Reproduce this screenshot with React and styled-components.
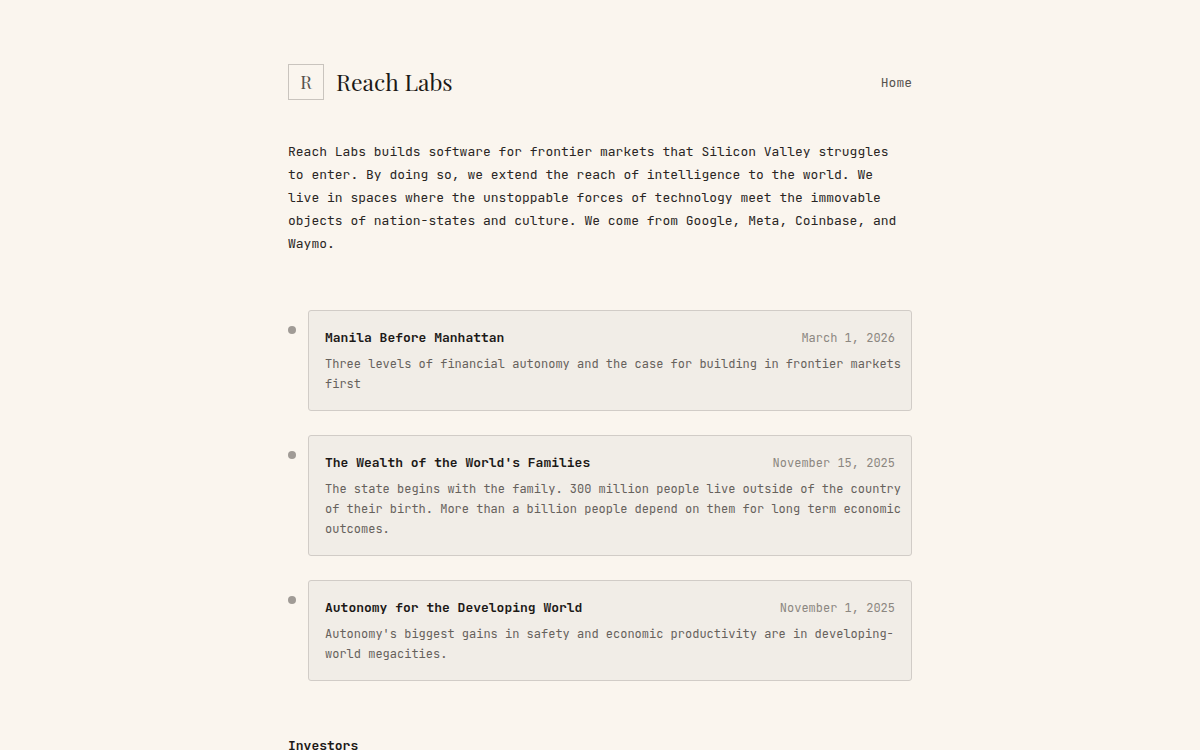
import React from "react";
import styled, { createGlobalStyle } from "styled-components";

const GlobalStyle = createGlobalStyle`
  *, *::before, *::after {
    box-sizing: border-box;
  }

  body {
    margin: 0;
    background-color: #faf5ee;
    color: #292524;
    font-family: "JetBrains Mono", "DejaVu Sans Mono", monospace;
    font-size: 13px;
  }

  h1, h2, p, ul {
    margin: 0;
    padding: 0;
  }

  a {
    color: inherit;
    text-decoration: none;
  }
`;

const Page = styled.div`
  max-width: 672px;
  margin: 0 auto;
  padding: 64px 24px;
`;

const Header = styled.header`
  display: flex;
  justify-content: space-between;
  align-items: center;
  margin-bottom: 40px;
`;

const Brand = styled.a`
  display: flex;
  align-items: center;
  gap: 12px;
  font-family: "Playfair Display", "Liberation Serif", serif;
`;

const Mark = styled.span`
  display: flex;
  align-items: center;
  justify-content: center;
  width: 36px;
  height: 36px;
  border: 1px solid #c9c4be;
  color: #57534e;
  font-size: 18px;
`;

const Name = styled.h1`
  color: #1c1917;
  font-size: 23px;
  font-weight: 400;
  line-height: 36px;
`;

const NavLink = styled.a`
  color: #57534e;

  &:hover {
    color: #1c1917;
  }
`;

const Intro = styled.p`
  padding-right: 12px;
  line-height: 23px;
`;

const Posts = styled.ul`
  display: flex;
  flex-direction: column;
  gap: 24px;
  margin: 55px 0;
  list-style: none;
`;

const Post = styled.li`
  display: flex;
  align-items: flex-start;
  gap: 12px;
`;

const Dot = styled.span`
  flex: none;
  width: 8px;
  height: 8px;
  margin-top: 16px;
  border-radius: 50%;
  background-color: #a09b96;
`;

const Card = styled.a`
  flex: 1;
  min-width: 0;
  padding: 16px 8px 16px 16px;
  border: 1px solid #d1ccc7;
  border-radius: 3px;
  background-color: #f1ede7;
`;

const CardTop = styled.div`
  display: flex;
  justify-content: space-between;
  align-items: baseline;
  gap: 16px;
  margin-bottom: 5px;
  padding-right: 8px;
  line-height: 21px;
`;

const Title = styled.h2`
  color: #1c1917;
  font-size: 13px;
  font-weight: 600;
`;

const PostDate = styled.time`
  flex: none;
  color: #8c8781;
  font-size: 12px;
`;

const Summary = styled.p`
  color: #66615c;
  font-size: 12px;
  line-height: 20px;
`;

const SectionTitle = styled.h2`
  color: #1c1917;
  font-size: 13px;
  font-weight: 700;
  line-height: 20px;
`;

const posts = [
  {
    title: "Manila Before Manhattan",
    date: "March 1, 2026",
    iso: "2026-03-01",
    summary:
      "Three levels of financial autonomy and the case for building in frontier markets first",
  },
  {
    title: "The Wealth of the World's Families",
    date: "November 15, 2025",
    iso: "2025-11-15",
    summary:
      "The state begins with the family. 300 million people live outside of the country of their birth. More than a billion people depend on them for long term economic outcomes.",
  },
  {
    title: "Autonomy for the Developing World",
    date: "November 1, 2025",
    iso: "2025-11-01",
    summary:
      "Autonomy's biggest gains in safety and economic productivity are in developing-world megacities.",
  },
];

const PostItem = ({ post }) => (
  <Post>
    <Dot />
    <Card href="#">
      <CardTop>
        <Title>{post.title}</Title>
        <PostDate dateTime={post.iso}>{post.date}</PostDate>
      </CardTop>
      <Summary>{post.summary}</Summary>
    </Card>
  </Post>
);

const App = () => {
  return (
    <>
      <GlobalStyle />
      <Page>
        <Header>
          <Brand href="#">
            <Mark>R</Mark>
            <Name>Reach Labs</Name>
          </Brand>
          <nav>
            <NavLink href="#">Home</NavLink>
          </nav>
        </Header>
        <main>
          <Intro>
            Reach Labs builds software for frontier markets that Silicon Valley
            struggles to enter. By doing so, we extend the reach of intelligence
            to the world. We live in spaces where the unstoppable forces of
            technology meet the immovable objects of nation-states and culture.
            We come from Google, Meta, Coinbase, and Waymo.
          </Intro>
          <Posts>
            {posts.map((post) => (
              <PostItem key={post.iso} post={post} />
            ))}
          </Posts>
          <SectionTitle>Investors</SectionTitle>
        </main>
      </Page>
    </>
  );
};

export default App;
